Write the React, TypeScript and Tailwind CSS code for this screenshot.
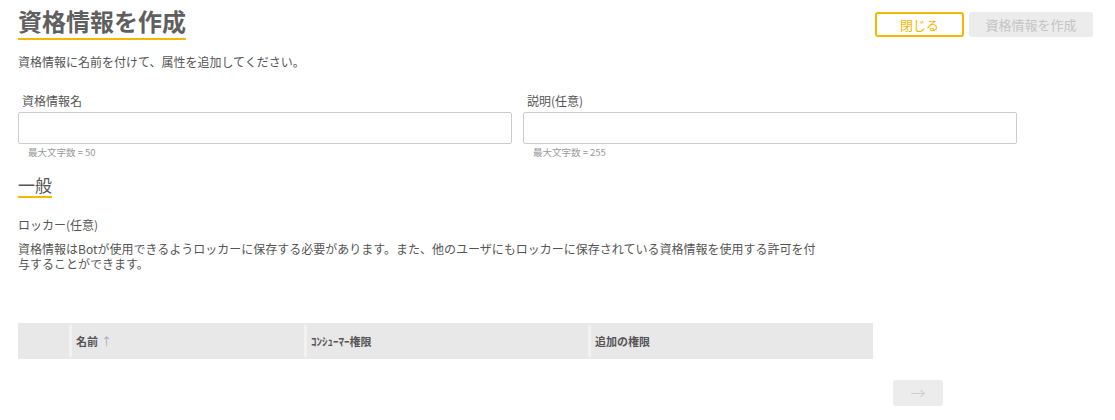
const font = { fontFamily: '"Noto Sans CJK JP", "Noto Sans", sans-serif' };

export default function App() {
  return (
    <div className="relative h-[420px] w-[1115px] overflow-hidden bg-white text-[#555]" style={font}>
      <div className="flex items-start justify-between pl-[18px] pr-[22px]">
        <div className="pt-[4px]">
          <h1 className="border-b-2 border-[#f5b800] pb-[1px] text-[24px] font-bold leading-[33px] text-[#5f5f5f]">
            資格情報を作成
          </h1>
        </div>
        <div className="mt-[12px] flex gap-[5px]">
          <button
            type="button"
            className="h-[25px] w-[89px] rounded-[3px] border-2 border-[#f5b800] bg-white text-[13px] leading-none text-[#f5b800]"
          >
            閉じる
          </button>
          <button
            type="button"
            className="h-[25px] w-[124px] rounded-[3px] bg-[#ececec] text-[13px] leading-none text-[#c4c4c4]"
          >
            資格情報を作成
          </button>
        </div>
      </div>

      <p className="ml-[18px] mt-[14px] text-[12px] leading-[16px] text-[#555]">
        資格情報に名前を付けて、属性を追加してください。
      </p>

      <div className="ml-[18px] mt-[23px] flex gap-[11px]">
        <Field label="資格情報名" hint="最大文字数 = 50" />
        <Field label="説明(任意)" hint="最大文字数 = 255" />
      </div>

      <div className="ml-[18px] mt-[16px] inline-block">
        <h2 className="border-b-2 border-[#f5b800] text-[17px] leading-[22px] text-[#555]">一般</h2>
      </div>

      <p className="ml-[18px] mt-[19px] text-[12px] leading-[16px]">ロッカー(任意)</p>
      <p className="ml-[18px] mt-[8px] w-[802px] text-[12px] leading-[15px]">
        資格情報はBotが使用できるようロッカーに保存する必要があります。また、他のユーザにもロッカーに保存されている資格情報を使用する許可を付与することができます。
      </p>

      <div className="ml-[18px] mt-[52px] flex h-[36px] w-[855px] items-center bg-[#e8e8e8] text-[11px] font-bold text-[#555]">
        <div className="w-[51px]" />
        <HeaderCell className="w-[235px]">
          名前 <span className="ml-[3px] font-normal text-[#aaa]">↑</span>
        </HeaderCell>
        <HeaderCell className="w-[284px]">ｺﾝｼｭｰﾏｰ権限</HeaderCell>
        <HeaderCell className="flex-1">追加の権限</HeaderCell>
      </div>

      <div className="ml-[893px] mt-[21px]">
        <button
          type="button"
          className="flex h-[26px] w-[50px] items-center justify-center rounded-[3px] bg-[#ececec] text-[15px] text-[#cfcfcf]"
        >
          →
        </button>
      </div>
    </div>
  );
}

function Field({ label, hint }: { label: string; hint: string }) {
  return (
    <div className="w-[494px]">
      <label className="ml-[4px] block text-[12px] leading-[16px] text-[#555]">{label}</label>
      <input
        type="text"
        className="mt-[3px] block h-[32px] w-full rounded-[2px] border border-[#cccccc] bg-white px-2 text-[12px] outline-none"
      />
      <p className="ml-[10px] mt-[2px] text-[9.5px] leading-[12px] text-[#999]">{hint}</p>
    </div>
  );
}

function HeaderCell({ className, children }: { className: string; children: React.ReactNode }) {
  return (
    <div className={`flex h-[32px] items-center border-l-[3px] border-[#f2f2f2] pl-[4px] ${className}`}>
      {children}
    </div>
  );
}
